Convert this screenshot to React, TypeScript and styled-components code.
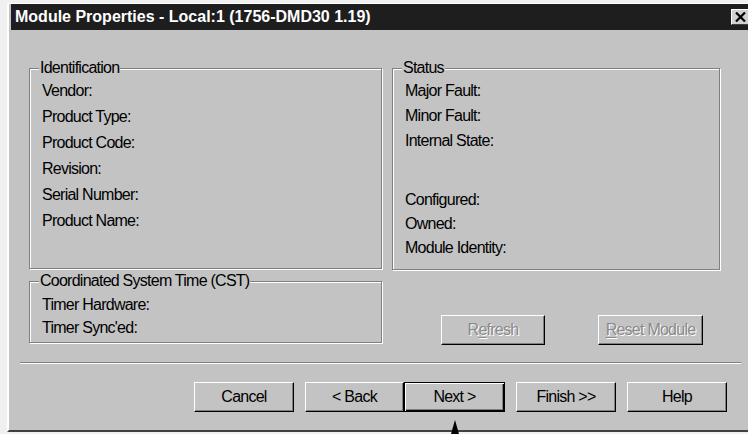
import React from "react";
import styled, { createGlobalStyle } from "styled-components";

const GlobalStyle = createGlobalStyle`
  html, body {
    margin: 0;
    padding: 0;
    width: 748px;
    height: 434px;
    overflow: hidden;
    background: #f0f0f0;
  }
  * {
    box-sizing: border-box;
  }
`;

const FACE = "#c3c3c3";
const UI_FONT = `"Liberation Sans", Arial, sans-serif`;

const Page = styled.div`
  position: relative;
  width: 748px;
  height: 434px;
  padding: 3px 0 0 7px;
`;

const Window = styled.div`
  width: 747px;
  background: ${FACE};
  border-top: 1px solid #fff;
  border-left: 2px solid #fff;
  border-bottom: 2px solid #404040;
  padding-bottom: 18px;
  font-family: ${UI_FONT};
  font-size: 16px;
  letter-spacing: -0.75px;
  color: #000;
`;

const TitleBar = styled.div`
  display: flex;
  align-items: center;
  justify-content: space-between;
  height: 26px;
  margin: 0 2px;
  padding: 0 3px 0 4px;
  background: #1e1e1e;
`;

const Title = styled.span`
  font-weight: bold;
  font-size: 16px;
  letter-spacing: 0;
  color: #fff;
  white-space: nowrap;
`;

const CloseButton = styled.button`
  display: flex;
  align-items: center;
  justify-content: center;
  width: 18px;
  height: 16px;
  padding: 0;
  background: #d0d0d0;
  border: 1px solid;
  border-color: #fff #404040 #404040 #fff;
`;

const Content = styled.div`
  display: grid;
  grid-template-columns: 353px 328px;
  column-gap: 10px;
  padding: 30px 0 0 20px;
`;

const Column = styled.div<{ $gap?: number }>`
  display: flex;
  flex-direction: column;
  gap: ${(p) => p.$gap ?? 0}px;
`;

const GroupBox = styled.fieldset<{ $h: number; $top: number }>`
  margin: 0;
  height: ${(p) => p.$h}px;
  padding: ${(p) => p.$top}px 8px 0 12px;
  border: 1px solid #808080;
  box-shadow: 1px 1px 0 #fff, inset 1px 1px 0 #fff;
  min-width: 0;
`;

const Legend = styled.legend`
  margin-left: -3px;
  padding: 0 1px;
  line-height: 16px;
  background: ${FACE};
`;

const Row = styled.div<{ $lh: number; $gap?: number }>`
  line-height: ${(p) => p.$lh}px;
  margin-top: ${(p) => p.$gap ?? 0}px;
  white-space: nowrap;
`;

const ActionRow = styled.div`
  display: flex;
  margin: 45px 0 0 49px;
  gap: 53px;
`;

const Button = styled.button<{ $w: number; $default?: boolean }>`
  width: ${(p) => p.$w}px;
  height: 30px;
  padding: 0;
  font-family: ${UI_FONT};
  font-size: 16px;
  letter-spacing: -0.75px;
  white-space: nowrap;
  color: #000;
  background: ${FACE};
  border: 1px solid;
  border-color: ${(p) => (p.$default ? "#000" : "#fff #000 #000 #fff")};
  box-shadow: ${(p) =>
    p.$default
      ? "inset 1px 1px 0 #fff, inset -1px -1px 0 #000, inset -2px -2px 0 #808080"
      : "inset -1px -1px 0 #808080"};

  &:disabled {
    color: #8a8a8a;
    text-shadow: 1px 1px 0 #fff;
  }

  u {
    text-underline-offset: 2px;
  }
`;

const Separator = styled.div`
  width: 721px;
  margin: 17px 0 0 11px;
  border-top: 1px solid #808080;
  border-bottom: 1px solid #fff;
`;

const ButtonRow = styled.div`
  display: flex;
  margin: 18px 0 0 185px;
`;

const Arrow = styled.svg`
  position: absolute;
  left: 450px;
  top: 420px;
`;

export default function App() {
  return (
    <>
      <GlobalStyle />
      <Page>
        <Window>
          <TitleBar>
            <Title>Module Properties - Local:1 (1756-DMD30 1.19)</Title>
            <CloseButton aria-label="Close">
              <svg width="11" height="10" viewBox="0 0 11 10">
                <path d="M1 0.5 L10 9.5 M10 0.5 L1 9.5" stroke="#000" strokeWidth="2.2" />
              </svg>
            </CloseButton>
          </TitleBar>

          <Content>
            <Column $gap={4}>
              <GroupBox $h={209} $top={2}>
                <Legend>Identification</Legend>
                <Row $lh={26}>Vendor:</Row>
                <Row $lh={26}>Product Type:</Row>
                <Row $lh={26}>Product Code:</Row>
                <Row $lh={26}>Revision:</Row>
                <Row $lh={26}>Serial Number:</Row>
                <Row $lh={26}>Product Name:</Row>
              </GroupBox>
              <GroupBox $h={70} $top={4}>
                <Legend>Coordinated System Time (CST)</Legend>
                <Row $lh={23}>Timer Hardware:</Row>
                <Row $lh={23}>Timer Sync'ed:</Row>
              </GroupBox>
            </Column>

            <Column>
              <GroupBox $h={210} $top={2}>
                <Legend>Status</Legend>
                <Row $lh={25}>Major Fault:</Row>
                <Row $lh={25}>Minor Fault:</Row>
                <Row $lh={25}>Internal State:</Row>
                <Row $lh={24} $gap={35}>Configured:</Row>
                <Row $lh={24}>Owned:</Row>
                <Row $lh={24}>Module Identity:</Row>
              </GroupBox>
              <ActionRow>
                <Button $w={104} disabled>
                  R<u>e</u>fresh
                </Button>
                <Button $w={105} disabled>
                  <u>R</u>eset Module
                </Button>
              </ActionRow>
            </Column>
          </Content>

          <Separator />

          <ButtonRow>
            <Button $w={100}>Cancel</Button>
            <Button $w={99} style={{ marginLeft: 11 }}>
              &lt; Back
            </Button>
            <Button $w={101} $default>
              Next &gt;
            </Button>
            <Button $w={100} style={{ marginLeft: 11 }}>
              Finish &gt;&gt;
            </Button>
            <Button $w={100} style={{ marginLeft: 11 }}>
              Help
            </Button>
          </ButtonRow>
        </Window>

        <Arrow width="10" height="14" viewBox="0 0 10 14">
          <polygon points="5,0 1,14 9,14" fill="#000" />
        </Arrow>
      </Page>
    </>
  );
}
